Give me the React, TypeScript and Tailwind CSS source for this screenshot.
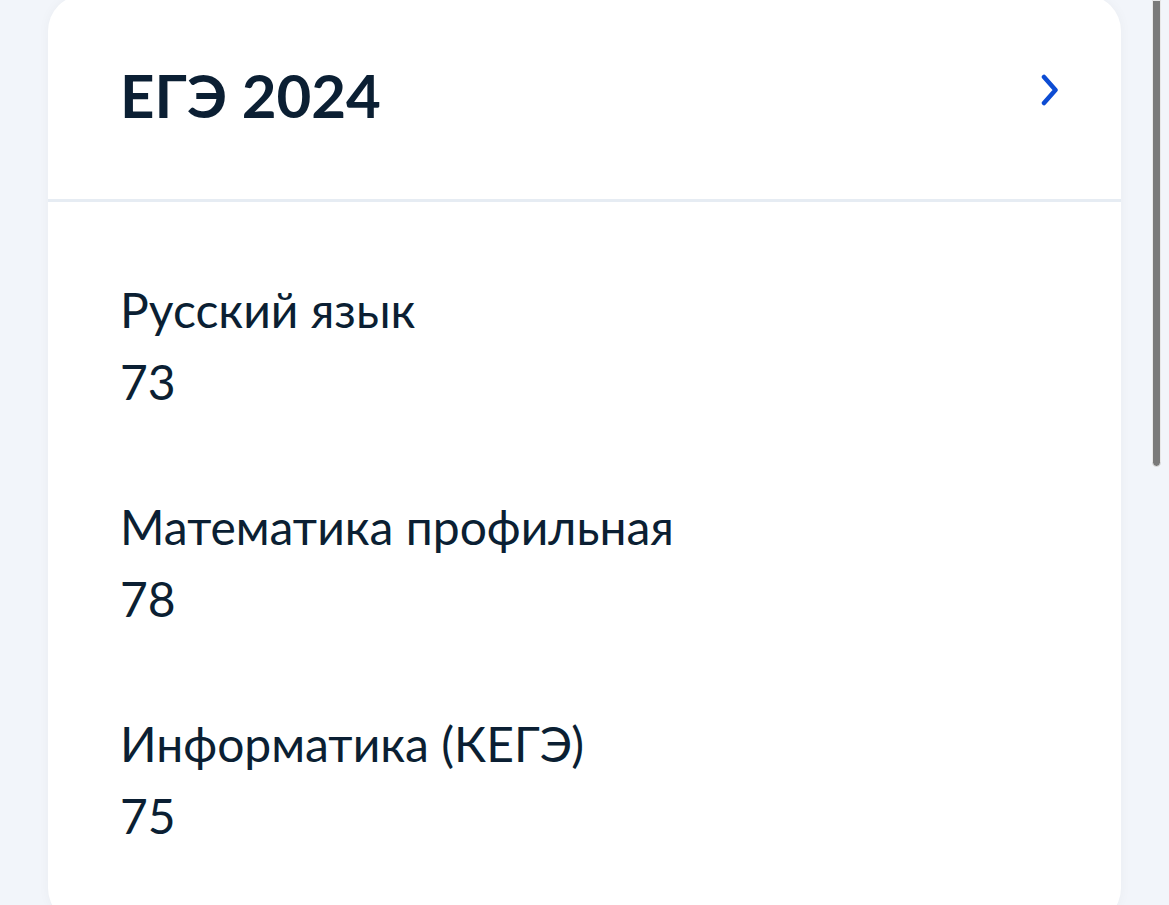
const subjects = [
  { name: "Русский язык", score: 73 },
  { name: "Математика профильная", score: 78 },
  { name: "Информатика (КЕГЭ)", score: 75 },
];

const App = () => {
  return (
    <div className="relative h-[905px] overflow-hidden bg-[#f2f5fa] px-12 font-['Lato',sans-serif] text-[#0b1f33]">
      {/* Card */}
      <div className="mt-[-5px] rounded-[36px] bg-white shadow-[0_0_12px_rgba(11,31,51,0.04)]">
        <div className="flex items-start justify-between border-b-[3px] border-[#e6ecf3] pb-[68px] pl-[72px] pr-[62px] pt-[64px]">
          <h2 className="text-[60px] font-bold leading-[72px]">ЕГЭ 2024</h2>
          <svg
            width="18"
            height="32"
            viewBox="0 0 18 32"
            fill="none"
            className="mt-[15px]"
          >
            <path
              d="M3 3 L14.5 16 L3 29"
              stroke="#0d4cd3"
              strokeWidth="4.5"
              strokeLinecap="round"
              strokeLinejoin="round"
            />
          </svg>
        </div>

        <div className="flex flex-col gap-[73px] px-[72px] pb-[72px] pt-[72px]">
          {subjects.map((s) => (
            <div key={s.name} className="text-[48px] leading-[72px]">
              <p>{s.name}</p>
              <p>{s.score}</p>
            </div>
          ))}
        </div>
      </div>

      {/* Scrollbar */}
      <div className="absolute right-[8px] top-0 h-[467px] w-[9px] rounded-b-full border border-[#e8e8e8] bg-[#7a7a7a]" />
    </div>
  );
};

export default App;
